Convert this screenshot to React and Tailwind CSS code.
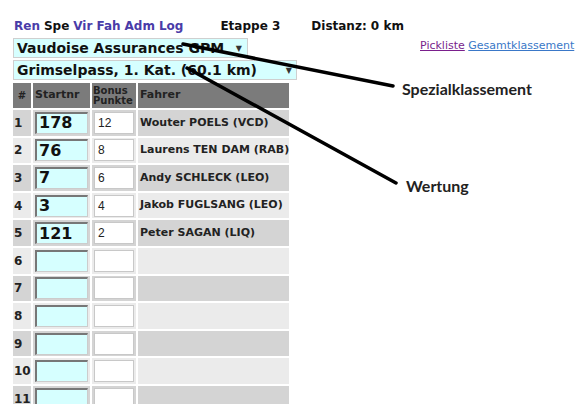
import React from "react";

const rows = [
  { n: 1, s: "178", b: "12", f: "Wouter POELS (VCD)" },
  { n: 2, s: "76", b: "8", f: "Laurens TEN DAM (RAB)" },
  { n: 3, s: "7", b: "6", f: "Andy SCHLECK (LEO)" },
  { n: 4, s: "3", b: "4", f: "Jakob FUGLSANG (LEO)" },
  { n: 5, s: "121", b: "2", f: "Peter SAGAN (LIQ)" },
  { n: 6 }, { n: 7 }, { n: 8 }, { n: 9 }, { n: 10 }, { n: 11 },
];

export default function App() {
  return (
    <div className="relative w-[582px] h-[404px] overflow-hidden bg-white" style={{ fontFamily: '"DejaVu Sans", Verdana, sans-serif' }}>
      <div className="pl-[14px] pt-[19px] flex items-baseline text-[12px] font-bold leading-[14px]">
        <span className="text-[#4a3ca8]">Ren</span>
        <span className="ml-[4px] text-[#111]">Spe</span>
        <span className="ml-[4px] text-[#4a3ca8]">Vir</span>
        <span className="ml-[4px] text-[#4a3ca8]">Fah</span>
        <span className="ml-[4px] text-[#4a3ca8]">Adm</span>
        <span className="ml-[4px] text-[#4a3ca8]">Log</span>
        <span className="ml-[37px] text-[#111]">Etappe 3</span>
        <span className="ml-[31px] text-[#111]">Distanz: 0 km</span>
      </div>
      <div className="flex mt-[5px]">
        <div className="ml-[13px] flex flex-col gap-[2px]">
          <div className="w-[235px] h-[20px] bg-[#d6ffff] border border-[#cfcfcf] flex items-center pl-[3px] text-[14px] font-bold text-[#111] leading-none relative">
            Vaudoise Assurances GPM
            <span className="absolute right-[5px] top-[6px] text-[8px] text-[#333]">▼</span>
          </div>
          <div className="w-[284px] h-[20px] bg-[#d6ffff] border border-[#cfcfcf] flex items-center pl-[3px] text-[14px] font-bold text-[#111] leading-none relative">
            Grimselpass, 1. Kat. (60.1 km)
            <span className="absolute right-[4px] top-[6px] text-[8px] text-[#333]">▼</span>
          </div>
        </div>
        <div className="ml-[123px] mt-[1px] text-[11px] leading-[13px]">
          <span className="text-[#7a1f8c] underline">Pickliste</span>{" "}
          <span className="text-[#3a78c8] underline">Gesamtklassement</span>
        </div>
      </div>
      <div className="ml-[13px] mt-[3px] grid grid-cols-[18px_57px_44px_151px] gap-[2px] auto-rows-[25.6px] grid-rows-[25px]">
        <div className="bg-[#7b7b7b] text-[10px] font-bold text-[#222] flex items-center justify-center">#</div>
        <div className="bg-[#7b7b7b] text-[11px] font-bold text-[#222] flex items-center pl-[2px]">Startnr</div>
        <div className="bg-[#7b7b7b] text-[10px] font-bold text-[#222] flex flex-col justify-center pl-[1px] leading-[10px]">
          <span>Bonus</span>
          <span>Punkte</span>
        </div>
        <div className="bg-[#7b7b7b] text-[11px] font-bold text-[#222] flex items-center pl-[2px]">Fahrer</div>
        {rows.map((r) => {
          const bg = r.n % 2 === 1 ? "bg-[#d4d4d4]" : "bg-[#ebebeb]";
          return (
            <React.Fragment key={r.n}>
              <div className={`${bg} text-[12px] font-bold text-[#222] flex items-center pl-[1px]`}>{r.n}</div>
              <div className={`${bg} flex items-center justify-center`}>
                <div className="w-[53px] h-[22px] bg-[#d6ffff] border-t-2 border-l-2 border-t-[#777] border-l-[#777] border-b border-r border-b-[#ccc] border-r-[#ccc] flex items-center pl-[2px] text-[16px] font-bold text-[#111] leading-none">
                  {r.s}
                </div>
              </div>
              <div className={`${bg} flex items-center justify-center`}>
                <div className="w-[40px] h-[22px] bg-white border border-[#c8c8c8] flex items-center pl-[3px] text-[12px] text-[#222] leading-none" style={{ fontFamily: '"Liberation Sans", Arial, sans-serif' }}>
                  {r.b}
                </div>
              </div>
              <div className={`${bg} flex items-center pl-[2px] text-[11px] font-bold text-[#222] whitespace-nowrap`}>{r.f}</div>
            </React.Fragment>
          );
        })}
      </div>
      <div className="absolute left-[402px] top-[77px] text-[16px] font-bold text-[#222]" style={{ fontFamily: 'Lato, "Open Sans", sans-serif' }}>Spezialklassement</div>
      <div className="absolute left-[406px] top-[174px] text-[16px] font-bold text-[#222]" style={{ fontFamily: 'Lato, "Open Sans", sans-serif' }}>Wertung</div>
      <svg className="absolute left-0 top-0" width="582" height="404">
        <line x1="183" y1="44" x2="393" y2="86" stroke="#000" strokeWidth="3.5" strokeLinecap="round" />
        <line x1="187" y1="68" x2="396" y2="183" stroke="#000" strokeWidth="3.5" strokeLinecap="round" />
      </svg>
    </div>
  );
}
